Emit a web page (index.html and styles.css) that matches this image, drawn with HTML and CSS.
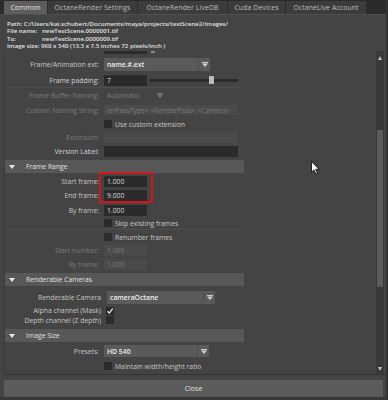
FILE: index.html
```html
<!DOCTYPE html>
<html>
<head>
<meta charset="utf-8">
<title>Render Settings</title>
<link rel="stylesheet" href="styles.css">
</head>
<body>
<div class="window">
  <div class="tabs">
    <div class="tab active w43">Common</div>
    <div class="tab w89">OctaneRender Settings</div>
    <div class="tab w89">OctaneRender LiveDB</div>
    <div class="tab w57">Cuda Devices</div>
    <div class="tab w80">OctaneLive Account</div>
  </div>
  <div class="info">
    <div>Path: C:/Users/kai.schubert/Documents/maya/projects/testScene2/images/</div>
    <div><span class="k">File name:</span>newTestScene.0000001.tif</div>
    <div><span class="k">To:</span>newTestScene.0000009.tif</div>
    <div>Image size: 960 x 540 (13.3 x 7.5 inches 72 pixels/inch )</div>
  </div>
  <div class="scroll">
    <div class="content">
      <div class="row h4 partial"><span class="pf"></span><span class="ph"></span></div>

      <div class="row h18"><span class="lbl">Frame/Animation ext:</span>
        <div class="dd w106"><span class="dd-t">name.#.ext</span><span class="dd-b"><svg class="arr" viewBox="0 0 6 5"><path d="M0 0.5H6" stroke="#cfcfcf" stroke-width="1"/><path d="M0 1.6H6L3 5Z" fill="#cfcfcf"/></svg></span></div>
      </div>
      <div class="row h14"><span class="lbl bright">Frame padding:</span>
        <div class="field fs">7</div>
        <div class="slider"><span class="knob"></span></div>
      </div>
      <div class="sep"></div>
      <div class="row h15"><span class="lbl dim">Frame Buffer Naming:</span>
        <div class="dd off w62"><span class="dd-t">Automatic</span><span class="dd-b"><svg class="arr" viewBox="0 0 6 5"><path d="M0 0.5H6" stroke="#7a7a7a" stroke-width="1"/><path d="M0 1.6H6L3 5Z" fill="#7a7a7a"/></svg></span></div>
      </div>
      <div class="row h14"><span class="lbl dim">Custom Naming String:</span>
        <div class="field off fw f10">ierPassType&gt;:&lt;RenderPass&gt;.&lt;Camera&gt;</div>
      </div>
      <div class="row h14 cbrow"><span class="cb"></span><span>Use custom extension</span></div>
      <div class="row h13"><span class="lbl dim">Extension:</span>
        <div class="field off fw"></div>
      </div>
      <div class="row h14"><span class="lbl bright">Version Label:</span>
        <div class="field fw"></div>
      </div>

      <div class="hdr mt2"><svg class="tri" viewBox="0 0 6 4"><path d="M0 0H6L3 4Z" fill="#e6e6e6"/></svg><span>Frame Range</span></div>
      <div class="row h14 mt1"><span class="lbl">Start frame:</span><div class="field fs">1.000</div></div>
      <div class="row h15"><span class="lbl">End frame:</span><div class="field fs">9.000</div></div>
      <div class="row h14"><span class="lbl">By frame:</span><div class="field fs">1.000</div></div>
      <div class="row h12 cbrow"><span class="cb"></span><span>Skip existing frames</span></div>
      <div class="sep"></div>
      <div class="row h14 cbrow"><span class="cb"></span><span>Renumber frames</span></div>
      <div class="row h13"><span class="lbl dim">Start number:</span><div class="field off fs">1.000</div></div>
      <div class="row h14"><span class="lbl dim">By frame:</span><div class="field off fs">1.000</div></div>

      <div class="hdr h12 mt2"><svg class="tri" viewBox="0 0 6 4"><path d="M0 0H6L3 4Z" fill="#e6e6e6"/></svg><span>Renderable Cameras</span></div>
      <div class="row h18 mt2"><span class="lbl wide">Renderable Camera</span>
        <div class="dd w108 ml6"><span class="dd-t">cameraOctane</span><span class="dd-b"><svg class="arr" viewBox="0 0 6 5"><path d="M0 0.5H6" stroke="#cfcfcf" stroke-width="1"/><path d="M0 1.6H6L3 5Z" fill="#cfcfcf"/></svg></span></div>
      </div>
      <div class="row h9"><span class="lbl wide">Alpha channel (Mask)</span><span class="cb ml5"><svg viewBox="0 0 8 8"><path d="M1.6 4.3L3.3 6.1L6.7 1.6" stroke="#f0f0f0" stroke-width="1.3" fill="none"/></svg></span></div>
      <div class="row h10"><span class="lbl wide">Depth channel (Z depth)</span><span class="cb ml5"></span></div>

      <div class="hdr h12 mt4"><svg class="tri" viewBox="0 0 6 4"><path d="M0 0H6L3 4Z" fill="#e6e6e6"/></svg><span>Image Size</span></div>
      <div class="row h18"><span class="lbl">Presets:</span>
        <div class="dd w105 h12d"><span class="dd-t">HD 540</span><span class="dd-b"><svg class="arr" viewBox="0 0 6 5"><path d="M0 0.5H6" stroke="#cfcfcf" stroke-width="1"/><path d="M0 1.6H6L3 5Z" fill="#cfcfcf"/></svg></span></div>
      </div>
      <div class="row h12 cbrow"><span class="cb"></span><span>Maintain width/height ratio</span></div>

      <div class="redbox"></div>
    </div>
    <div class="spacer"></div>
    <div class="scrollbar">
      <span class="up"></span>
      <span class="thumb"></span>
      <span class="grow"></span>
      <span class="down"></span>
    </div>
  </div>
  <div class="footer"><button class="close">Close</button></div>
</div>
<svg class="cursor" viewBox="0 0 9 14"><path d="M0.5 0.5L0.5 11.3L3 8.9L4.9 13.1L6.5 12.4L4.7 8.3L8 8.3Z" fill="#ffffff" stroke="#000000" stroke-width="0.8" stroke-linejoin="round"/></svg>
</body>
</html>
```
FILE: styles.css
```css
* { box-sizing: border-box; margin: 0; padding: 0; }
html, body { width: 388px; height: 400px; overflow: hidden; }
body {
  background: #333333;
  font-family: "Open Sans", "DejaVu Sans", sans-serif;
  font-size: 6.8px;
  color: #c6c6c6;
  position: relative;
}
.window {
  width: 386px;
  height: 400px;
  background: #444444;
  display: flex;
  flex-direction: column;
}
.tabs {
  height: 14px;
  flex: none;
  background: #2b2b2b;
  display: flex;
  align-items: flex-end;
  gap: 1px;
  padding-left: 4px;
}
.tab {
  height: 13px;
  background: #3c3c3c;
  color: #bcbcbc;
  display: flex;
  align-items: center;
  justify-content: center;
  letter-spacing: 0.15px;
  white-space: nowrap;
}
.tab.active { background: #5d5d5d; color: #e6e6e6; }
.w43 { width: 43px; }
.w89 { width: 89px; }
.w57 { width: 57px; }
.w80 { width: 80px; }

.info {
  height: 37px;
  flex: none;
  border-top: 1px solid #4f4f4f;
  padding: 4.5px 0 0 7px;
  font-size: 6.1px;
  font-weight: 600;
  line-height: 7.6px;
  color: #e2e2e2;
  white-space: nowrap;
}
.info .k { display: inline-block; width: 35px; }

.scroll {
  height: 324px;
  width: 381px;
  flex: none;
  margin-left: 4px;
  display: flex;
  border-left: 1px solid #393939;
  border-bottom: 1px solid #333333;
}
.content {
  width: 239px;
  flex: none;
  position: relative;
  overflow: hidden;
  display: flex;
  flex-direction: column;
}
.spacer { flex: 1; }
.scrollbar {
  width: 8px;
  flex: none;
  margin-right: 1px;
  background: #393939;
  display: flex;
  flex-direction: column;
  align-items: center;
  padding: 5px 0 3px;
}
.up {
  width: 0; height: 0;
  border-left: 2.5px solid transparent;
  border-right: 2.5px solid transparent;
  border-bottom: 4px solid #bdbdbd;
}
.down {
  width: 0; height: 0;
  border-left: 2.5px solid transparent;
  border-right: 2.5px solid transparent;
  border-top: 4px solid #bdbdbd;
}
.thumb {
  width: 6px;
  height: 157px;
  margin-top: 70px;
  background: #5c5c5c;
  border-radius: 1px;
}
.grow { flex: 1; }

.row { display: flex; align-items: center; flex: none; white-space: nowrap; }
.h4 { height: 4px; }
.h9 { height: 9px; }
.h10 { height: 10px; }
.h12 { height: 12px; }
.h13 { height: 13px; }
.h14 { height: 14px; }
.h15 { height: 15px; }
.h18 { height: 18px; }
.mt1 { margin-top: 1px; }
.mt2 { margin-top: 2px; }
.mt4 { margin-top: 4px; }
.ml5 { margin-left: 5px; }
.ml6 { margin-left: 6px; }

.partial { align-items: flex-start; }
.pf { width: 43px; height: 3px; margin-left: 99px; background: #2b2b2b; }
.ph { width: 4px; height: 2px; margin-left: 4px; background: #8a8a8a; }

.lbl {
  width: 94px;
  flex: none;
  text-align: right;
  margin-right: 5px;
}
.lbl.wide { width: 96px; margin-right: 0; }
.bright { color: #d2d2d2; }
.dim { color: #7a7a7a; }

.field {
  height: 11px;
  background: #2b2b2b;
  color: #d8d8d8;
  padding-left: 3px;
  display: flex;
  align-items: center;
  overflow: hidden;
  flex: none;
}
.fs { width: 43px; }
.fw { width: 134px; }
.f10 { height: 10px; }
.field.off { background: #4a4a4a; color: #7a7a7a; }

.dd {
  display: flex;
  height: 13px;
  background: #5a5a5a;
  color: #eeeeee;
  font-weight: 600;
  flex: none;
}
.h12d { height: 12px; }
.w106 { width: 106px; }
.w108 { width: 108px; }
.w105 { width: 105px; }
.w62 { width: 62px; }
.dd-t { flex: 1; padding-left: 3px; display: flex; align-items: center; }
.dd-b {
  width: 12px;
  border-left: 1px solid #4d4d4d;
  display: flex;
  align-items: center;
  justify-content: center;
}
.arr { width: 6px; height: 5px; display: block; }
.dd.off { background: transparent; color: #7a7a7a; font-weight: 400; }
.dd.off .dd-b { border-left: none; }

.slider {
  position: relative;
  width: 88px;
  height: 3px;
  margin-left: 3px;
  background: #2b2b2b;
  flex: none;
}
.knob {
  position: absolute;
  left: 58.7px;
  top: -2.5px;
  width: 5px;
  height: 8px;
  background: #bdbdbd;
  border-radius: 1px;
}

.cbrow { padding-left: 99px; }
.cb {
  width: 8px;
  height: 8px;
  background: #2b2b2b;
  margin-right: 3px;
  flex: none;
  display: flex;
}
.cb svg { width: 8px; height: 8px; }

.sep { height: 1px; flex: none; background: #4e4e4e; }

.hdr {
  height: 13px;
  flex: none;
  background: #585858;
  color: #e0e0e0;
  display: flex;
  align-items: center;
}
.tri { width: 6px; height: 4px; margin-left: 4.3px; margin-right: 10.7px; flex: none; }

.redbox {
  position: absolute;
  left: 93.7px;
  top: 121.3px;
  width: 54px;
  height: 31px;
  border: 2px solid #d3151c;
}

.footer {
  height: 25px;
  flex: none;
  padding: 5px 0 0 4px;
  border-bottom: 3px solid #383838;
}
.close {
  width: 379px;
  height: 17px;
  border: none;
  background: #5b5b5b;
  color: #e2e2e2;
  font-family: inherit;
  font-size: 7px;
  display: flex;
  align-items: center;
  justify-content: center;
}

.cursor {
  position: absolute;
  left: 311px;
  top: 161px;
  width: 9px;
  height: 14px;
}
```
